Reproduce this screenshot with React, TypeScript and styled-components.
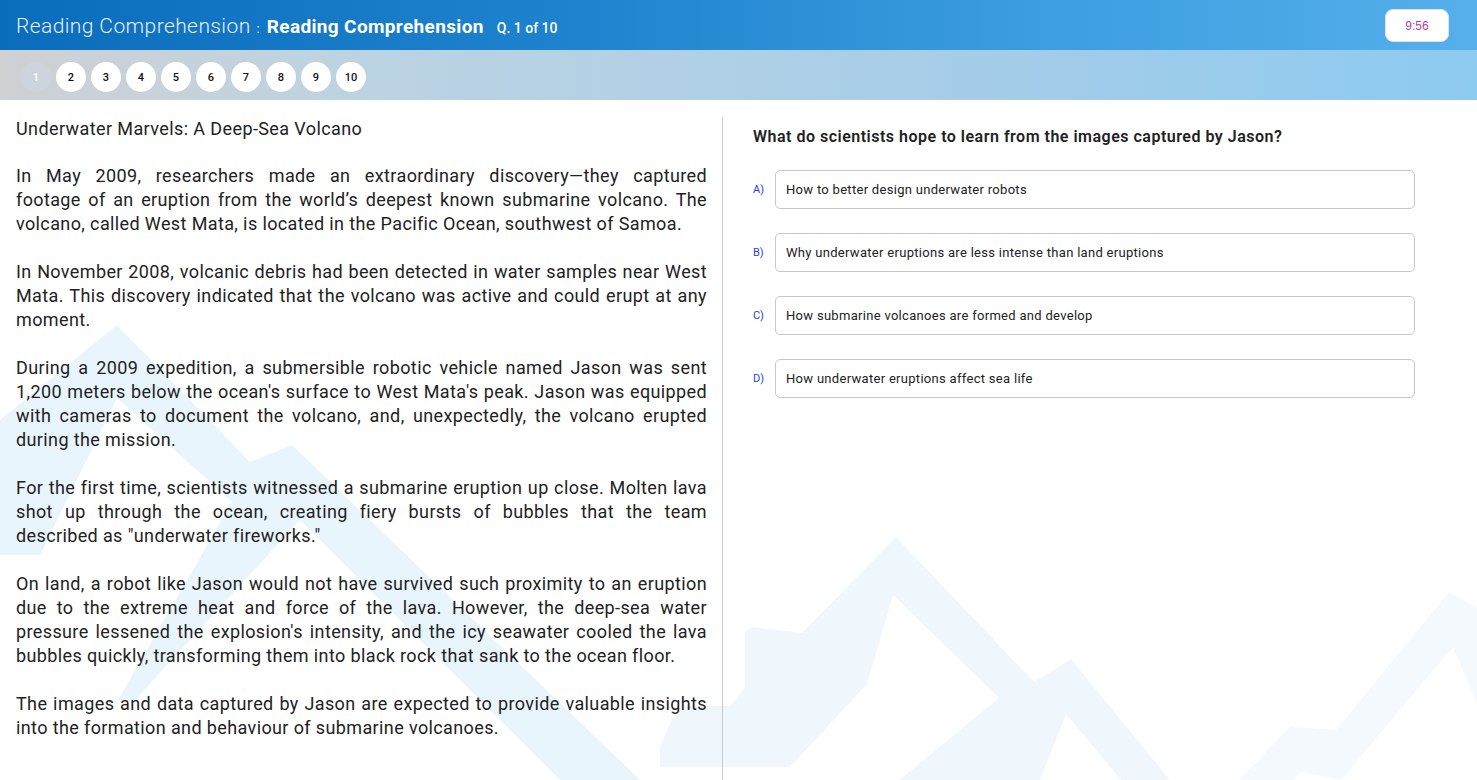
import React from "react";
import styled, { createGlobalStyle } from "styled-components";

const passage = [
  [
    "In May 2009, researchers made an extraordinary discovery—they captured",
    "footage of an eruption from the world’s deepest known submarine volcano. The",
    "volcano, called West Mata, is located in the Pacific Ocean, southwest of Samoa.",
  ],
  [
    "In November 2008, volcanic debris had been detected in water samples near West",
    "Mata. This discovery indicated that the volcano was active and could erupt at any",
    "moment.",
  ],
  [
    "During a 2009 expedition, a submersible robotic vehicle named Jason was sent",
    "1,200 meters below the ocean's surface to West Mata's peak. Jason was equipped",
    "with cameras to document the volcano, and, unexpectedly, the volcano erupted",
    "during the mission.",
  ],
  [
    "For the first time, scientists witnessed a submarine eruption up close. Molten lava",
    "shot up through the ocean, creating fiery bursts of bubbles that the team",
    'described as "underwater fireworks."',
  ],
  [
    "On land, a robot like Jason would not have survived such proximity to an eruption",
    "due to the extreme heat and force of the lava. However, the deep-sea water",
    "pressure lessened the explosion's intensity, and the icy seawater cooled the lava",
    "bubbles quickly, transforming them into black rock that sank to the ocean floor.",
  ],
  [
    "The images and data captured by Jason are expected to provide valuable insights",
    "into the formation and behaviour of submarine volcanoes.",
  ],
];

const options = [
  { key: "A", text: "How to better design underwater robots" },
  { key: "B", text: "Why underwater eruptions are less intense than land eruptions" },
  { key: "C", text: "How submarine volcanoes are formed and develop" },
  { key: "D", text: "How underwater eruptions affect sea life" },
];

const questions = [1, 2, 3, 4, 5, 6, 7, 8, 9, 10];

const Mountains = () => (
  <Backdrop viewBox="0 100 1477 680" preserveAspectRatio="none">
    <path
      fill="#e9f5fd"
      d="M0 420 L117 325 L250 462 L292 445 L640 780 L560 780 L300 520 L135 700 L118 700 L232 502 L117 398 L40 555 L0 555 Z"
    />
    <path
      fill="#eff7fd"
      d="M896 537 L1034 682 L1071 659 L1170 780 L1121 780 L1066 714 L1040 780 L899 780 L999 698 L893 595 L867 684 L790 767 L660 767 L660 747 L673 717 L687 706 L730 706 L745 688 L745 632 L751 627 L802 633 Z"
    />
    <path
      fill="#f3f9fd"
      d="M1239 780 L1290 727 L1336 730 L1449 592 L1477 608 L1477 703 L1453 647 L1341 780 L1302 772 L1292 780 Z"
    />
  </Backdrop>
);

const App: React.FunctionComponent = () => {
  return (
    <Page>
      <GlobalStyle />
      <Header>
        <TitleGroup>
          <SubjectTitle>Reading Comprehension</SubjectTitle>
          <Colon>:</Colon>
          <SectionTitle>Reading Comprehension</SectionTitle>
          <QuestionCount>Q. 1 of 10</QuestionCount>
        </TitleGroup>
        <Timer>9:56</Timer>
      </Header>
      <NavBar>
        {questions.map((n) => (
          <NavDot key={n} $active={n === 1}>
            {n}
          </NavDot>
        ))}
      </NavBar>
      <Main>
        <Mountains />
        <PassageColumn>
          <PassageTitle>Underwater Marvels: A Deep-Sea Volcano</PassageTitle>
          {passage.map((lines, i) => (
            <Paragraph key={i}>
              {lines.map((line, j) => (
                <Line key={j} $last={j === lines.length - 1}>
                  {line}
                </Line>
              ))}
            </Paragraph>
          ))}
        </PassageColumn>
        <QuestionColumn>
          <QuestionText>
            What do scientists hope to learn from the images captured by Jason?
          </QuestionText>
          <OptionList>
            {options.map((o) => (
              <OptionRow key={o.key}>
                <OptionLetter>{o.key})</OptionLetter>
                <OptionBox>{o.text}</OptionBox>
              </OptionRow>
            ))}
          </OptionList>
        </QuestionColumn>
      </Main>
    </Page>
  );
};

const GlobalStyle = createGlobalStyle`
  html, body {
    margin: 0;
    padding: 0;
    background: #ffffff;
  }
  body {
    font-family: Roboto, "Noto Sans", sans-serif;
    color: #222222;
  }
  * {
    box-sizing: border-box;
  }
`;

const Page = styled.div`
  display: flex;
  flex-direction: column;
  height: 100vh;
  overflow: hidden;
`;

const Header = styled.header`
  align-items: center;
  background: linear-gradient(90deg, #0a6cbc 0%, #1f84cf 40%, #3c9ddf 70%, #55afeb 100%);
  display: flex;
  flex: 0 0 50px;
  justify-content: space-between;
  padding: 0 28px 0 16px;
`;

const TitleGroup = styled.div`
  align-items: baseline;
  color: #ffffff;
  display: flex;
  margin-top: 2px;
`;

const SubjectTitle = styled.span`
  color: #e6eff8;
  font-size: 21px;
  font-weight: 300;
  letter-spacing: 0.4px;
`;

const Colon = styled.span`
  font-size: 13px;
  margin: 0 7px 0 6px;
`;

const SectionTitle = styled.span`
  font-size: 19px;
  font-weight: 700;
  letter-spacing: 0.35px;
`;

const QuestionCount = styled.span`
  font-size: 14px;
  font-weight: 500;
  margin-left: 13px;
`;

const Timer = styled.div`
  align-items: center;
  background: #ffffff;
  border: 1px solid #dde3ea;
  border-radius: 8px;
  color: #c03c9c;
  display: flex;
  font-family: "Liberation Sans", Arial, sans-serif;
  font-size: 12px;
  height: 33px;
  justify-content: center;
  margin-top: 1px;
  width: 64px;
`;

const NavBar = styled.nav`
  align-items: center;
  background: linear-gradient(90deg, #cfd1d3 0%, #bcd3e2 25%, #a6cde8 65%, #8dcaf0 100%);
  display: flex;
  flex: 0 0 50px;
  gap: 5px;
  padding: 4px 0 0 21px;
`;

const NavDot = styled.div<{ $active?: boolean }>`
  align-items: center;
  background: ${(p) => (p.$active ? "#cdd4dd" : "#ffffff")};
  border-radius: 50%;
  color: ${(p) => (p.$active ? "#ffffff" : "#111111")};
  display: flex;
  font-size: 11px;
  font-weight: 500;
  height: 30px;
  justify-content: center;
  width: 30px;
`;

const Main = styled.main`
  display: flex;
  flex: 1;
  padding-top: 17px;
  position: relative;
`;

const Backdrop = styled.svg`
  height: 100%;
  left: 0;
  position: absolute;
  top: 0;
  width: 100%;
  z-index: 0;
`;

const PassageColumn = styled.section`
  border-right: 1px solid #c9c9c9;
  flex: 0 0 723px;
  padding: 0 15px 0 16px;
  position: relative;
  z-index: 1;
`;

const PassageTitle = styled.h1`
  font-size: 18px;
  font-weight: 400;
  letter-spacing: 0.4px;
  line-height: 24px;
  margin: 0 0 23px;
`;

const Paragraph = styled.p`
  font-size: 18px;
  letter-spacing: 0.38px;
  line-height: 24px;
  margin: 0 0 24px;
`;

const Line = styled.span<{ $last?: boolean }>`
  display: block;
  text-align: justify;
  text-align-last: ${(p) => (p.$last ? "left" : "justify")};
  white-space: nowrap;
`;

const QuestionColumn = styled.section`
  flex: 1;
  padding: 10px 62px 0 30px;
  position: relative;
  z-index: 1;
`;

const QuestionText = styled.h2`
  font-size: 16px;
  font-weight: 600;
  letter-spacing: 0.5px;
  line-height: 20px;
  margin: 0 0 23px;
`;

const OptionList = styled.div`
  display: flex;
  flex-direction: column;
  gap: 24px;
`;

const OptionRow = styled.div`
  align-items: center;
  display: flex;
  gap: 10px;
`;

const OptionLetter = styled.span`
  color: #2b3ce0;
  font-size: 11px;
  width: 12px;
`;

const OptionBox = styled.div`
  align-items: center;
  background: #ffffff;
  border: 1px solid #c8c8c8;
  border-radius: 5px;
  display: flex;
  flex: 1;
  font-size: 13px;
  height: 39px;
  letter-spacing: 0.3px;
  padding: 0 10px;
`;

export default App;
